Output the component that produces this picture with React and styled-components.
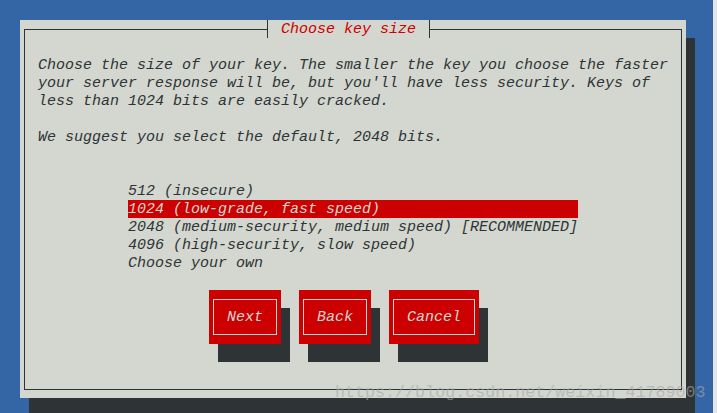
import React from 'react';
import styled, { createGlobalStyle } from 'styled-components';

const C = {
  blue: '#3465a4',
  grey: '#d3d7cf',
  dark: '#2e3436',
  red: '#cc0000',
};

const Global = createGlobalStyle`
  html, body { margin: 0; padding: 0; background: #e6e6e6; }
  body { width: 717px; height: 413px; overflow: hidden; }
`;

const Screen = styled.div`
  position: relative;
  width: 713px;
  height: 413px;
  box-sizing: border-box;
  padding: 20px 0 0 20px;
  background: ${C.blue};
  overflow: hidden;
  font-family: "Liberation Mono", "DejaVu Sans Mono", monospace;
  font-style: italic;
  font-size: 15px;
  line-height: 18px;
  color: ${C.dark};
`;

const Dialog = styled.section`
  position: relative;
  width: 666px;
  height: 378px;
  box-sizing: border-box;
  padding: 9px 4px 8px 4px;
  background: ${C.grey};
  box-shadow: 9px 18px 0 ${C.dark};
`;

const Frame = styled.div`
  height: 100%;
  box-sizing: border-box;
  border: 1px solid ${C.dark};
  padding: 27px 0 0 13px;
  display: flex;
  flex-direction: column;
`;

const Title = styled.h1`
  position: absolute;
  top: 0;
  left: 247px;
  height: 18px;
  box-sizing: border-box;
  margin: 0;
  padding: 1px 13px 0;
  border-left: 1px solid ${C.dark};
  border-right: 1px solid ${C.dark};
  background: ${C.grey};
  color: ${C.red};
  font: inherit;
  line-height: 17px;
  white-space: pre;
`;

const Message = styled.p`
  margin: 0;
  white-space: pre;
`;

const Options = styled.ul`
  list-style: none;
  margin: 35px 0 0 90px;
  padding: 0;
  display: flex;
  flex-direction: column;
`;

const Option = styled.li`
  width: 450px;
  height: 18px;
  box-sizing: border-box;
  padding-top: 1px;
  line-height: 17px;
  white-space: pre;
  background: ${(p) => (p.$selected ? C.red : 'transparent')};
  color: ${(p) => (p.$selected ? C.grey : C.dark)};
`;

const Buttons = styled.div`
  display: flex;
  gap: 18px;
  margin: 18px 0 0 171px;
`;

const Button = styled.button`
  margin: 0;
  border: none;
  padding: 9px 4px;
  background: ${C.red};
  box-shadow: 9px 18px 0 ${C.dark};
  font: inherit;
  color: ${C.grey};
  cursor: pointer;
`;

const ButtonFrame = styled.span`
  display: block;
  border: 1px solid ${C.grey};
  padding: 9px 13px 7px;
  line-height: 18px;
  white-space: pre;
`;

const Watermark = styled.div`
  position: absolute;
  left: 335px;
  top: 383px;
  font-family: "Liberation Mono", monospace;
  font-style: normal;
  font-size: 16.7px;
  line-height: 20px;
  color: rgba(168, 168, 168, 0.6);
  white-space: pre;
  pointer-events: none;
`;

const message = [
  'Choose the size of your key. The smaller the key you choose the faster',
  "your server response will be, but you'll have less security. Keys of",
  'less than 1024 bits are easily cracked.',
  '',
  'We suggest you select the default, 2048 bits.',
].join('\n');

const options = [
  '512 (insecure)',
  '1024 (low-grade, fast speed)',
  '2048 (medium-security, medium speed) [RECOMMENDED]',
  '4096 (high-security, slow speed)',
  'Choose your own',
];

export default function App() {
  return (
    <>
      <Global />
      <Screen>
        <Dialog>
          <Title>Choose key size</Title>
          <Frame>
            <Message>{message}</Message>
            <Options>
              {options.map((o, i) => (
                <Option key={o} $selected={i === 1}>
                  {o}
                </Option>
              ))}
            </Options>
            <Buttons>
              {['Next', 'Back', 'Cancel'].map((b) => (
                <Button key={b}>
                  <ButtonFrame>{b}</ButtonFrame>
                </Button>
              ))}
            </Buttons>
          </Frame>
        </Dialog>
        <Watermark>https://blog.csdn.net/weixin_41789003</Watermark>
      </Screen>
    </>
  );
}
